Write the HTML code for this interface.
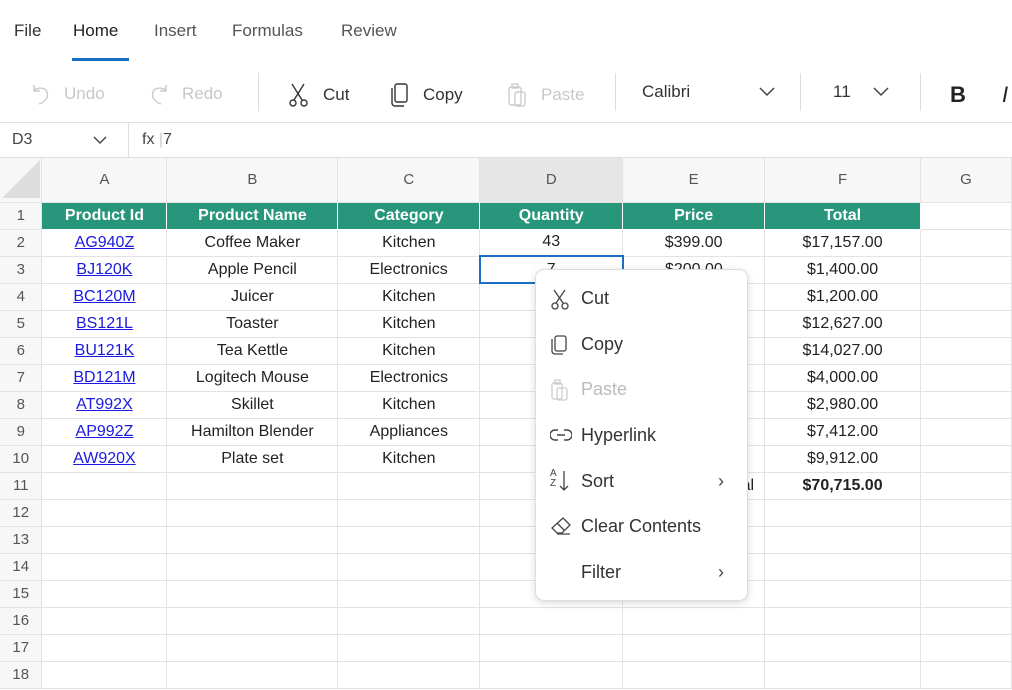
<!DOCTYPE html><html><head><style>
*{box-sizing:border-box;margin:0;padding:0}
body{width:1012px;height:690px;overflow:hidden;background:#fff;font-family:"Liberation Sans",sans-serif;color:#222;position:relative}
.a{position:absolute;white-space:nowrap}
.tab{top:21px;font-size:17px;color:#555}
.tb{top:82px;font-size:17px;color:#333;display:flex;align-items:center;gap:12px}
.dis{color:#c8c8c8}
.sep{top:73px;width:1px;height:38px;background:#ddd}
table{position:absolute;left:0;top:158px;border-collapse:collapse;table-layout:fixed}
td{border:1px solid #e3e3e3;height:27px;font-size:16px;text-align:center;padding:0;overflow:hidden;white-space:nowrap}
td:first-child{border-left:none}
tr.h td{height:44px;background:#f7f7f7;color:#555;font-size:15px;border-top:none}
td.rh{background:#f7f7f7;color:#555;font-size:15px}
tr.g td.c{background:#28967a;color:#fff;font-weight:bold;border-color:#fff}
a{color:#1a1ae0;text-decoration:underline}
.menu{left:535px;top:269px;width:213px;height:332px;background:#fff;border:1px solid #ddd;border-radius:9px;box-shadow:0 2px 8px rgba(0,0,0,.15)}
.mi{position:absolute;left:45px;font-size:18px;color:#333}
.ic{position:absolute;left:14px}
.ch{position:absolute;left:182px;font-size:18px;color:#444}
</style></head><body>
<div class="a tab" style="left:14px;color:#333">File</div>
<div class="a tab" style="left:73px;color:#222">Home</div>
<div class="a" style="left:72px;top:58px;width:57px;height:3px;background:#1a6fc4"></div>
<div class="a tab" style="left:154px">Insert</div>
<div class="a tab" style="left:232px">Formulas</div>
<div class="a tab" style="left:341px">Review</div>

<div class="a tb dis" style="left:30px"><svg width="22" height="24" viewBox="0 0 22 24" fill="none" stroke="#ccc" stroke-width="1.5"><path d="M4 3v6h6M4 9c3-4 11-4 13 1 2 5-2 10-8 12"/></svg>Undo</div>
<div class="a tb dis" style="left:148px"><svg width="22" height="24" viewBox="0 0 22 24" fill="none" stroke="#ccc" stroke-width="1.5"><path d="M18 3v6h-6M18 9c-3-4-11-4-13 1-2 5 2 10 8 12"/></svg>Redo</div>
<div class="a sep" style="left:258px"></div>
<div class="a tb" style="left:287px"><svg width="24" height="26" viewBox="0 0 24 26" fill="none" stroke="#333" stroke-width="1.4"><path d="M5 2l10 16M17 2L7 18"/><circle cx="6" cy="21" r="3"/><circle cx="17" cy="21" r="3"/></svg>Cut</div>
<div class="a tb" style="left:389px"><svg width="22" height="26" viewBox="0 0 22 26" fill="none" stroke="#333" stroke-width="1.4"><rect x="6" y="2" width="12" height="18" rx="2"/><path d="M3 6v15a3 3 0 0 0 3 3h9"/></svg>Copy</div>
<div class="a tb dis" style="left:505px"><svg width="24" height="26" viewBox="0 0 22 26" fill="none" stroke="#ccc" stroke-width="1.4"><rect x="3" y="5" width="12" height="18" rx="2"/><rect x="9" y="10" width="10" height="14" rx="2"/><rect x="6" y="2" width="6" height="4"/></svg>Paste</div>
<div class="a sep" style="left:615px"></div>
<div class="a tb" style="left:642px">Calibri</div>
<svg class="a" style="left:759px;top:87px" width="16" height="10" viewBox="0 0 16 10" fill="none" stroke="#444" stroke-width="1.5"><path d="M1 1l7 7 7-7"/></svg>
<div class="a sep" style="left:800px"></div>
<div class="a tb" style="left:833px">11</div>
<svg class="a" style="left:873px;top:87px" width="16" height="10" viewBox="0 0 16 10" fill="none" stroke="#444" stroke-width="1.5"><path d="M1 1l7 7 7-7"/></svg>
<div class="a sep" style="left:920px"></div>
<div class="a tb" style="left:950px;font-weight:bold;font-size:22px;color:#222">B</div>
<div class="a tb" style="left:1002px;font-style:italic;font-size:22px;color:#222">I</div>

<div class="a" style="left:0;top:122px;width:1012px;height:1px;background:#e0e0e0"></div>
<div class="a" style="left:0;top:157px;width:1012px;height:1px;background:#e0e0e0"></div>
<div class="a" style="left:128px;top:123px;width:1px;height:34px;background:#e0e0e0"></div>
<div class="a" style="left:12px;top:131px;font-size:16px;color:#444">D3</div>
<svg class="a" style="left:93px;top:136px" width="14" height="9" viewBox="0 0 14 9" fill="none" stroke="#444" stroke-width="1.4"><path d="M1 1l6 6 6-6"/></svg>
<div class="a" style="left:142px;top:131px;font-size:16px;color:#444">fx <span style="color:#ccc">|</span>7</div>

<table>
<colgroup><col style="width:42px"><col style="width:125px"><col style="width:171px"><col style="width:142px"><col style="width:143px"><col style="width:142px"><col style="width:156px"><col style="width:91px"></colgroup>
<tr class="h"><td style="position:relative"><svg style="position:absolute;left:2px;top:2px" width="38" height="38"><path d="M38 0V38H0Z" fill="#ddd"/></svg></td><td>A</td><td>B</td><td>C</td><td style="background:#e6e6e6">D</td><td>E</td><td>F</td><td>G</td></tr>
<tr class="g"><td class="rh">1</td><td class="c">Product Id</td><td class="c">Product Name</td><td class="c">Category</td><td class="c">Quantity</td><td class="c">Price</td><td class="c">Total</td><td></td></tr>
<tr><td class="rh">2</td><td><a>AG940Z</a></td><td>Coffee Maker</td><td>Kitchen</td><td>43</td><td>$399.00</td><td>$17,157.00</td><td></td></tr>
<tr><td class="rh">3</td><td><a>BJ120K</a></td><td>Apple Pencil</td><td>Electronics</td><td style="border:2px solid #1a6fc4">7</td><td>$200.00</td><td>$1,400.00</td><td></td></tr>
<tr><td class="rh">4</td><td><a>BC120M</a></td><td>Juicer</td><td>Kitchen</td><td></td><td></td><td>$1,200.00</td><td></td></tr>
<tr><td class="rh">5</td><td><a>BS121L</a></td><td>Toaster</td><td>Kitchen</td><td></td><td></td><td>$12,627.00</td><td></td></tr>
<tr><td class="rh">6</td><td><a>BU121K</a></td><td>Tea Kettle</td><td>Kitchen</td><td></td><td></td><td>$14,027.00</td><td></td></tr>
<tr><td class="rh">7</td><td><a>BD121M</a></td><td>Logitech Mouse</td><td>Electronics</td><td></td><td></td><td>$4,000.00</td><td></td></tr>
<tr><td class="rh">8</td><td><a>AT992X</a></td><td>Skillet</td><td>Kitchen</td><td></td><td></td><td>$2,980.00</td><td></td></tr>
<tr><td class="rh">9</td><td><a>AP992Z</a></td><td>Hamilton Blender</td><td>Appliances</td><td></td><td></td><td>$7,412.00</td><td></td></tr>
<tr><td class="rh">10</td><td><a>AW920X</a></td><td>Plate set</td><td>Kitchen</td><td></td><td></td><td>$9,912.00</td><td></td></tr>
<tr><td class="rh">11</td><td></td><td></td><td></td><td></td><td style="text-align:right;padding-right:10px">Total</td><td style="font-weight:bold">$70,715.00</td><td></td></tr>
<tr><td class="rh">12</td><td></td><td></td><td></td><td></td><td></td><td></td><td></td></tr>
<tr><td class="rh">13</td><td></td><td></td><td></td><td></td><td></td><td></td><td></td></tr>
<tr><td class="rh">14</td><td></td><td></td><td></td><td></td><td></td><td></td><td></td></tr>
<tr><td class="rh">15</td><td></td><td></td><td></td><td></td><td></td><td></td><td></td></tr>
<tr><td class="rh">16</td><td></td><td></td><td></td><td></td><td></td><td></td><td></td></tr>
<tr><td class="rh">17</td><td></td><td></td><td></td><td></td><td></td><td></td><td></td></tr>
<tr><td class="rh">18</td><td></td><td></td><td></td><td></td><td></td><td></td><td></td></tr>
</table>

<div class="a menu">
<svg class="ic" style="top:19px" width="20" height="22" viewBox="0 0 20 22" fill="none" stroke="#444" stroke-width="1.3"><path d="M4 1l9 13M15 1L6 14"/><circle cx="5" cy="17" r="3"/><circle cx="15" cy="17" r="3"/></svg>
<div class="mi" style="top:18px">Cut</div>
<svg class="ic" style="top:64px" width="20" height="22" viewBox="0 0 20 22" fill="none" stroke="#444" stroke-width="1.3"><rect x="5" y="2" width="11" height="15" rx="2"/><path d="M2 5v12a3 3 0 0 0 3 3h8"/></svg>
<div class="mi" style="top:64px">Copy</div>
<svg class="ic" style="top:109px" width="20" height="22" viewBox="0 0 20 22" fill="none" stroke="#ccc" stroke-width="1.3"><rect x="2" y="4" width="10" height="16" rx="2"/><rect x="7" y="9" width="10" height="12" rx="2"/><rect x="5" y="1" width="5" height="4"/></svg>
<div class="mi" style="top:109px;color:#bbb">Paste</div>
<svg class="ic" style="top:158px" width="22" height="14" viewBox="0 0 22 14" fill="none" stroke="#444" stroke-width="1.4"><path d="M8 2H5a5 5 0 0 0 0 10h3M14 2h3a5 5 0 0 1 0 10h-3M7 7h8"/></svg>
<div class="mi" style="top:155px">Hyperlink</div>
<div class="ic" style="top:199px;font-size:10px;line-height:10px;color:#444">A<br>Z</div>
<svg class="ic" style="left:23px;top:200px" width="10" height="22" viewBox="0 0 10 22" fill="none" stroke="#444" stroke-width="1.3"><path d="M5 1v19M1 16l4 4 4-4"/></svg>
<div class="mi" style="top:201px">Sort</div>
<div class="ch" style="top:201px">&#x203A;</div>
<svg class="ic" style="top:246px" width="22" height="20" viewBox="0 0 22 20" fill="none" stroke="#444" stroke-width="1.3"><path d="M13 2l7 7-8 8H7l-5-5zM7 7l7 7M7 18h13"/></svg>
<div class="mi" style="top:246px">Clear Contents</div>
<div class="mi" style="top:292px">Filter</div>
<div class="ch" style="top:292px">&#x203A;</div>
</div>
</body></html>
